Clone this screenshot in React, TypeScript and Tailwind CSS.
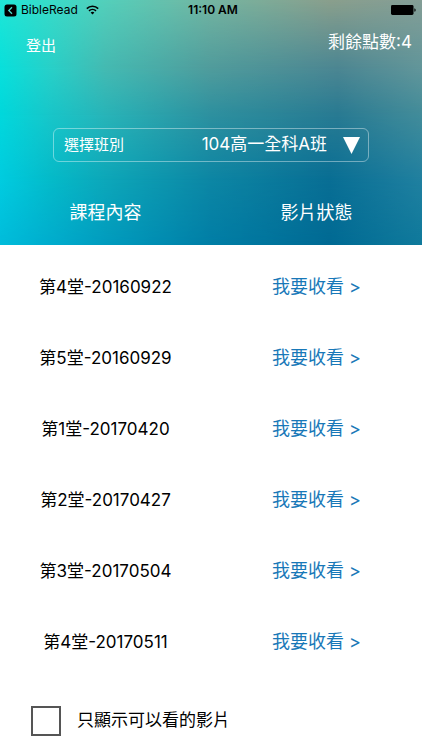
// App.tsx

import React, { useState } from "react";

interface Lesson {
  title: string;
}

const LESSONS: Lesson[] = [
  { title: "第4堂-20160922" },
  { title: "第5堂-20160929" },
  { title: "第1堂-20170420" },
  { title: "第2堂-20170427" },
  { title: "第3堂-20170504" },
  { title: "第4堂-20170511" },
];

// Horizontal colour bands stacked on each other, every band fades into the next one down
const HeaderBackground: React.FC = () => (
  <div className="absolute inset-x-0 top-0 h-[245px]" aria-hidden="true">
    <div className="absolute inset-0 bg-[linear-gradient(to_right,#00bcdb,#009cbf_25%,#007ea6_50%,#006a94_78%,#0f7a9c)]" />
    <div className="absolute inset-0 bg-[linear-gradient(to_right,#00cce0,#04bac9_12%,#0ca7b9_25%,#0c86a4_50%,#086e94_78%,#2080a0)] mask-[linear-gradient(to_bottom,black_180px,transparent_245px)]" />
    <div className="absolute inset-0 bg-[linear-gradient(to_right,#00d8dc,#18c6c9_12%,#28b4b8_25%,#2d909f_50%,#287a92_80%,#428c9a)] mask-[linear-gradient(to_bottom,black_115px,transparent_180px)]" />
    <div className="absolute inset-0 bg-[linear-gradient(to_right,#08e0dc,#28d0c8_12%,#44bab2_25%,#509c9c_50%,#4c8692_80%,#62969a)] mask-[linear-gradient(to_bottom,black_68px,transparent_115px)]" />
    <div className="absolute inset-0 bg-[linear-gradient(to_right,#20e6d6,#54cfba_25%,#74b5a1_50%,#8a9f8c_78%,#849e96)] mask-[linear-gradient(to_bottom,black,transparent_68px)]" />
  </div>
);

const StatusBar: React.FC = () => (
  <div className="grid h-5 grid-cols-3 items-center pl-1 text-xs text-black">
    <div className="flex items-center gap-1">
      <svg width="13" height="13" viewBox="0 0 13 13" aria-hidden="true">
        <rect x="0.5" y="0.5" width="12" height="12" rx="2.5" />
        <path d="M8 3.2 4.8 6.5 8 9.8" fill="none" stroke="#4fdccb" strokeWidth="1.3" />
      </svg>
      <span>BibleRead</span>
      <svg className="ml-1" width="13" height="10" viewBox="0 0 13 10" fill="none" stroke="black" aria-hidden="true">
        <path d="M0.8 3.6a8.1 8.1 0 0 1 11.4 0" strokeWidth="1.6" />
        <path d="M3 5.9a5 5 0 0 1 7 0" strokeWidth="1.5" />
        <path d="M6.5 9.6 4.6 7.6a2.7 2.7 0 0 1 3.8 0z" fill="black" stroke="none" />
      </svg>
    </div>
    <span className="text-center font-semibold">11:10 AM</span>
    <svg className="mr-1.5 justify-self-end" width="25" height="10" viewBox="0 0 25 10" aria-hidden="true">
      <rect width="22.5" height="10" rx="1.4" />
      <path d="M23.4 3.2a1.9 1.9 0 0 1 0 3.6z" />
    </svg>
  </div>
);

export default function App() {
  const [onlyAvailable, setOnlyAvailable] = useState<boolean>(false);

  return (
    <main className="relative bg-white pb-3 font-['Inter','Noto_Sans_CJK_TC',sans-serif] text-black">
      <HeaderBackground />
      <div className="relative">
        <StatusBar />

        <header className="flex items-start justify-between pl-[26px] pr-[10px] pt-2 text-white">
          <button type="button" className="pt-2 text-[15px] leading-5">
            登出
          </button>
          <p className="text-[17px] leading-7">剩餘點數:4</p>
        </header>

        <div className="mx-[53px] mt-[72px] flex h-[34px] items-center rounded-md border border-white/40 pl-[10px] pr-2 text-white">
          <label htmlFor="class-select" className="shrink-0 text-[15px]">
            選擇班別
          </label>
          <select
            id="class-select"
            className="min-w-0 flex-1 appearance-none bg-transparent text-right text-[17px] outline-none [text-align-last:right]"
          >
            <option>104高一全科A班</option>
          </select>
          <svg className="ml-4 shrink-0" width="17" height="17" viewBox="0 0 17 17" fill="white" aria-hidden="true">
            <path d="M0 0h17L8.5 17z" />
          </svg>
        </div>

        <table className="mt-4 w-full table-fixed text-center">
          <thead className="text-lg text-white">
            <tr className="h-[70px]">
              <th scope="col" className="font-normal">課程內容</th>
              <th scope="col" className="font-normal">影片狀態</th>
            </tr>
          </thead>
          <tbody>
            {LESSONS.map((lesson) => (
              <tr key={lesson.title} className="h-[71px]">
                <td className="pt-2 text-[17px]">{lesson.title}</td>
                <td className="pt-1.5 text-lg text-[#1878b8]">
                  <a href="#watch">我要收看 &gt;</a>
                </td>
              </tr>
            ))}
          </tbody>
        </table>

        <label className="mt-8 flex items-center gap-4 pl-[31px] text-[17px]">
          <input
            type="checkbox"
            checked={onlyAvailable}
            onChange={(e) => setOnlyAvailable(e.target.checked)}
            className="size-[30px] appearance-none border-2 border-[#555] bg-white checked:bg-[#1878b8]"
          />
          只顯示可以看的影片
        </label>
      </div>
    </main>
  );
}
